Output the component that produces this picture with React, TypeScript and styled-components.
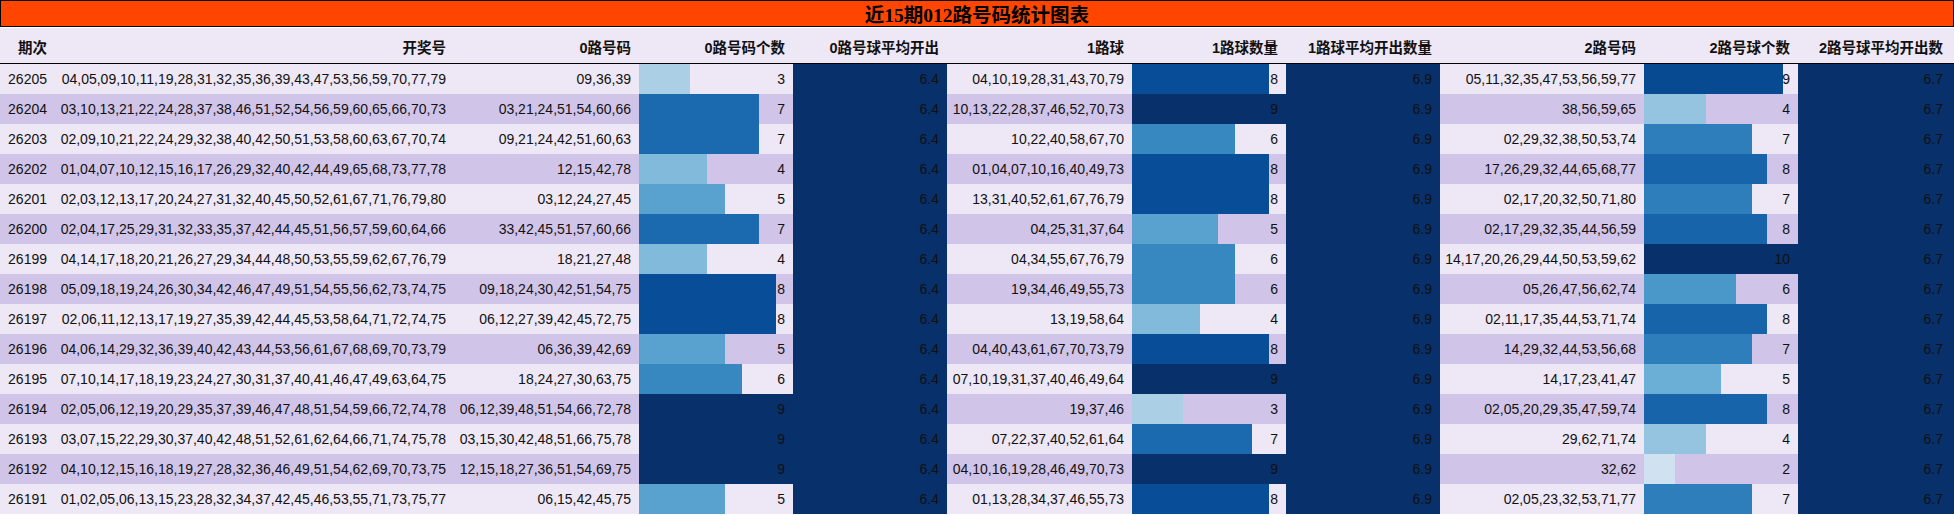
import React from "react";
import styled, { createGlobalStyle } from "styled-components";

const GlobalStyle = createGlobalStyle`
  html, body { margin: 0; padding: 0; background: #ffffff; }
  body { font-family: "Liberation Sans", "Noto Sans CJK SC", sans-serif; }
`;

type Row = {
  issue: string;
  nums: string;
  r0: string;
  c0: number;
  r1: string;
  c1: number;
  r2: string;
  c2: number;
};

const rows: Row[] = [
  { issue: "26205", nums: "04,05,09,10,11,19,28,31,32,35,36,39,43,47,53,56,59,70,77,79", r0: "09,36,39", c0: 3, r1: "04,10,19,28,31,43,70,79", c1: 8, r2: "05,11,32,35,47,53,56,59,77", c2: 9 },
  { issue: "26204", nums: "03,10,13,21,22,24,28,37,38,46,51,52,54,56,59,60,65,66,70,73", r0: "03,21,24,51,54,60,66", c0: 7, r1: "10,13,22,28,37,46,52,70,73", c1: 9, r2: "38,56,59,65", c2: 4 },
  { issue: "26203", nums: "02,09,10,21,22,24,29,32,38,40,42,50,51,53,58,60,63,67,70,74", r0: "09,21,24,42,51,60,63", c0: 7, r1: "10,22,40,58,67,70", c1: 6, r2: "02,29,32,38,50,53,74", c2: 7 },
  { issue: "26202", nums: "01,04,07,10,12,15,16,17,26,29,32,40,42,44,49,65,68,73,77,78", r0: "12,15,42,78", c0: 4, r1: "01,04,07,10,16,40,49,73", c1: 8, r2: "17,26,29,32,44,65,68,77", c2: 8 },
  { issue: "26201", nums: "02,03,12,13,17,20,24,27,31,32,40,45,50,52,61,67,71,76,79,80", r0: "03,12,24,27,45", c0: 5, r1: "13,31,40,52,61,67,76,79", c1: 8, r2: "02,17,20,32,50,71,80", c2: 7 },
  { issue: "26200", nums: "02,04,17,25,29,31,32,33,35,37,42,44,45,51,56,57,59,60,64,66", r0: "33,42,45,51,57,60,66", c0: 7, r1: "04,25,31,37,64", c1: 5, r2: "02,17,29,32,35,44,56,59", c2: 8 },
  { issue: "26199", nums: "04,14,17,18,20,21,26,27,29,34,44,48,50,53,55,59,62,67,76,79", r0: "18,21,27,48", c0: 4, r1: "04,34,55,67,76,79", c1: 6, r2: "14,17,20,26,29,44,50,53,59,62", c2: 10 },
  { issue: "26198", nums: "05,09,18,19,24,26,30,34,42,46,47,49,51,54,55,56,62,73,74,75", r0: "09,18,24,30,42,51,54,75", c0: 8, r1: "19,34,46,49,55,73", c1: 6, r2: "05,26,47,56,62,74", c2: 6 },
  { issue: "26197", nums: "02,06,11,12,13,17,19,27,35,39,42,44,45,53,58,64,71,72,74,75", r0: "06,12,27,39,42,45,72,75", c0: 8, r1: "13,19,58,64", c1: 4, r2: "02,11,17,35,44,53,71,74", c2: 8 },
  { issue: "26196", nums: "04,06,14,29,32,36,39,40,42,43,44,53,56,61,67,68,69,70,73,79", r0: "06,36,39,42,69", c0: 5, r1: "04,40,43,61,67,70,73,79", c1: 8, r2: "14,29,32,44,53,56,68", c2: 7 },
  { issue: "26195", nums: "07,10,14,17,18,19,23,24,27,30,31,37,40,41,46,47,49,63,64,75", r0: "18,24,27,30,63,75", c0: 6, r1: "07,10,19,31,37,40,46,49,64", c1: 9, r2: "14,17,23,41,47", c2: 5 },
  { issue: "26194", nums: "02,05,06,12,19,20,29,35,37,39,46,47,48,51,54,59,66,72,74,78", r0: "06,12,39,48,51,54,66,72,78", c0: 9, r1: "19,37,46", c1: 3, r2: "02,05,20,29,35,47,59,74", c2: 8 },
  { issue: "26193", nums: "03,07,15,22,29,30,37,40,42,48,51,52,61,62,64,66,71,74,75,78", r0: "03,15,30,42,48,51,66,75,78", c0: 9, r1: "07,22,37,40,52,61,64", c1: 7, r2: "29,62,71,74", c2: 4 },
  { issue: "26192", nums: "04,10,12,15,16,18,19,27,28,32,36,46,49,51,54,62,69,70,73,75", r0: "12,15,18,27,36,51,54,69,75", c0: 9, r1: "04,10,16,19,28,46,49,70,73", c1: 9, r2: "32,62", c2: 2 },
  { issue: "26191", nums: "01,02,05,06,13,15,23,28,32,34,37,42,45,46,53,55,71,73,75,77", r0: "06,15,42,45,75", c0: 5, r1: "01,13,28,34,37,46,55,73", c1: 8, r2: "02,05,23,32,53,71,77", c2: 7 },
];

const BLUES = ["#f7fbff", "#deebf7", "#c6dbef", "#9ecae1", "#6baed6", "#4292c6", "#2171b5", "#08519c", "#08306b"];

function hexToRgb(h: string): number[] {
  return [1, 3, 5].map((i) => parseInt(h.slice(i, i + 2), 16));
}

function blues(t: number): string {
  const x = Math.max(0, Math.min(1, t)) * (BLUES.length - 1);
  const i = Math.min(Math.floor(x), BLUES.length - 2);
  const f = x - i;
  const a = hexToRgb(BLUES[i]);
  const b = hexToRgb(BLUES[i + 1]);
  const c = a.map((v, k) => Math.round(v + (b[k] - v) * f));
  return `rgb(${c[0]}, ${c[1]}, ${c[2]})`;
}

const COLS = "55px 399px 185px 154px 154px 185px 154px 154px 204px 154px 1fr";

const Page = styled.div`
  width: 1954px;
  display: flex;
  flex-direction: column;
  color: #111;
`;

const TitleBar = styled.div`
  height: 25px;
  background: #ff4500;
  border: 1px solid #000;
  display: flex;
  align-items: center;
  justify-content: center;
  font-family: "Liberation Serif", "Noto Sans CJK SC", serif;
  font-weight: bold;
  font-size: 19.5px;
  color: #000;
  margin-bottom: 1px;
`;

const GridRow = styled.div<{ $alt?: boolean; $head?: boolean }>`
  display: grid;
  grid-template-columns: ${COLS};
  height: ${(p) => (p.$head ? "35px" : "30px")};
  background: ${(p) => (p.$alt ? "#d1c4e9" : "#ede7f6")};
  border-bottom: ${(p) => (p.$head ? "1px solid #000" : "none")};
`;

const Cell = styled.div<{ $last?: boolean }>`
  display: flex;
  align-items: center;
  justify-content: flex-end;
  padding-right: ${(p) => (p.$last ? "11px" : "8px")};
  font-size: 14px;
  white-space: nowrap;
  overflow: hidden;
`;

const HeadCell = styled(Cell)`
  font-family: "Liberation Sans", "Noto Sans CJK SC", sans-serif;
  font-weight: bold;
  font-size: 14.5px;
  padding-top: 1px;
`;

const BarCell = styled(Cell)`
  background-repeat: no-repeat;
`;

const AvgCell = styled(Cell)`
  background: #08306b;
  color: #111;
`;

const headers = [
  "期次",
  "开奖号",
  "0路号码",
  "0路号码个数",
  "0路号球平均开出",
  "1路球",
  "1路球数量",
  "1路球平均开出数量",
  "2路号码",
  "2路号球个数",
  "2路号球平均开出数",
];

function Bar({ value, max }: { value: number; max: number }) {
  const pct = (value / max) * 100;
  const color = blues(value / max);
  return (
    <BarCell style={{ backgroundImage: `linear-gradient(to right, ${color} 0, ${color} ${pct}%, transparent ${pct}%)` }}>
      {value}
    </BarCell>
  );
}

export default function App() {
  const max0 = Math.max(...rows.map((r) => r.c0));
  const max1 = Math.max(...rows.map((r) => r.c1));
  const max2 = Math.max(...rows.map((r) => r.c2));
  const avg = (k: "c0" | "c1" | "c2") => (rows.reduce((s, r) => s + r[k], 0) / rows.length).toFixed(1);
  const a0 = avg("c0");
  const a1 = avg("c1");
  const a2 = avg("c2");
  return (
    <Page>
      <GlobalStyle />
      <TitleBar>近15期012路号码统计图表</TitleBar>
      <GridRow $head>
        {headers.map((h, i) => (
          <HeadCell key={h} $last={i === headers.length - 1}>
            {h}
          </HeadCell>
        ))}
      </GridRow>
      {rows.map((r, i) => (
        <GridRow key={r.issue} $alt={i % 2 === 1}>
          <Cell>{r.issue}</Cell>
          <Cell>{r.nums}</Cell>
          <Cell>{r.r0}</Cell>
          <Bar value={r.c0} max={max0} />
          <AvgCell>{a0}</AvgCell>
          <Cell>{r.r1}</Cell>
          <Bar value={r.c1} max={max1} />
          <AvgCell>{a1}</AvgCell>
          <Cell>{r.r2}</Cell>
          <Bar value={r.c2} max={max2} />
          <AvgCell $last>{a2}</AvgCell>
        </GridRow>
      ))}
    </Page>
  );
}
